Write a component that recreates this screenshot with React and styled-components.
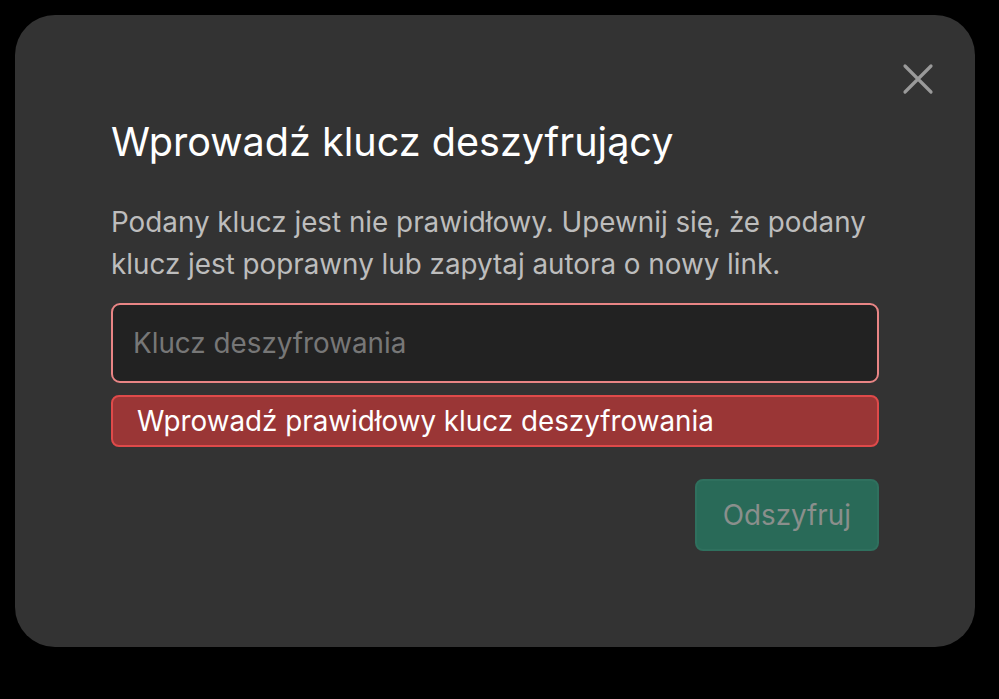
import React from "react";
import styled, { createGlobalStyle } from "styled-components";

const GlobalStyle = createGlobalStyle`
  html, body {
    margin: 0;
    padding: 0;
    background: #000;
    font-family: Inter, "Noto Sans", sans-serif;
  }
`;

const Page = styled.div`
  width: 999px;
  height: 699px;
  padding: 15px 24px 52px 15px;
  box-sizing: border-box;
  display: flex;
  align-items: flex-start;
`;

const Modal = styled.div`
  position: relative;
  width: 960px;
  height: 632px;
  box-sizing: border-box;
  background: #333333;
  border-radius: 40px;
  padding: 103px 96px 0 96px;
  display: flex;
  flex-direction: column;
`;

const CloseButton = styled.button`
  position: absolute;
  top: 46px;
  right: 39px;
  width: 36px;
  height: 36px;
  padding: 0;
  border: none;
  background: none;
  display: flex;
  align-items: center;
  justify-content: center;
  cursor: pointer;
`;

const Title = styled.h2`
  margin: 0;
  font-size: 39.6px;
  font-weight: 400;
  line-height: 48px;
  color: #ffffff;
`;

const Message = styled.p`
  margin: 35px 0 0 0;
  font-size: 27.8px;
  line-height: 42px;
  color: #bdbdbd;
`;

const Input = styled.input`
  margin-top: 18px;
  height: 80px;
  box-sizing: border-box;
  width: 100%;
  padding: 0 20px;
  background: #222222;
  border: 2px solid #e98585;
  border-radius: 9px;
  font-family: inherit;
  font-size: 27.8px;
  color: #ddd;
  outline: none;
  &::placeholder {
    color: #777777;
  }
`;

const ErrorBox = styled.div`
  margin-top: 12px;
  height: 52px;
  box-sizing: border-box;
  display: flex;
  align-items: center;
  padding: 0 24px;
  background: #9a3636;
  border: 2px solid #df4a4a;
  border-radius: 8px;
  font-size: 27.8px;
  color: #ffffff;
`;

const Actions = styled.div`
  margin-top: 32px;
  display: flex;
  justify-content: flex-end;
`;

const SubmitButton = styled.button`
  height: 72px;
  padding: 0 26px;
  border: 2px solid #2f705e;
  border-radius: 8px;
  background: #296a58;
  font-family: inherit;
  font-size: 27.8px;
  color: #8a8f8c;
  cursor: not-allowed;
`;

export default function App() {
  return (
    <>
      <GlobalStyle />
      <Page>
        <Modal>
          <CloseButton aria-label="Zamknij">
            <svg width="32" height="32" viewBox="0 0 32 32">
              <path
                d="M3 3 L29 29 M29 3 L3 29"
                stroke="#9a9a9a"
                strokeWidth="3.2"
                strokeLinecap="round"
              />
            </svg>
          </CloseButton>
          <Title>Wprowadź klucz deszyfrujący</Title>
          <Message>
            Podany klucz jest nie prawidłowy. Upewnij się, że podany klucz jest
            poprawny lub zapytaj autora o nowy link.
          </Message>
          <Input placeholder="Klucz deszyfrowania" />
          <ErrorBox>Wprowadź prawidłowy klucz deszyfrowania</ErrorBox>
          <Actions>
            <SubmitButton disabled>Odszyfruj</SubmitButton>
          </Actions>
        </Modal>
      </Page>
    </>
  );
}
